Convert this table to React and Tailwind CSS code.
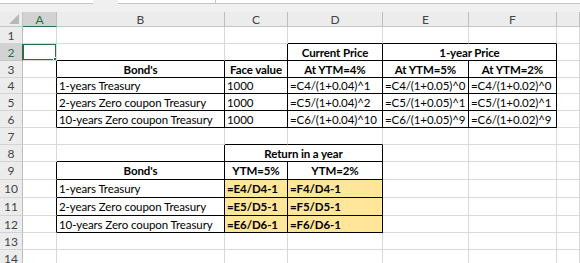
import React from "react";

const COLS = ["A", "B", "C", "D", "E", "F", "G"];
const WIDTHS = [34, 168, 63, 95, 86, 88, 23];
const HEIGHTS = [17, 17, 17, 16, 17, 17, 17, 17, 18, 18, 18, 17, 17, 17];

const bonds = [
  "1-years Treasury",
  "2-years Zero coupon Treasury",
  "10-years Zero coupon Treasury",
];

// r / b = black right / bottom border, c = centered, bold, fill = yellow
const head = (t) => ({ t, bold: 1, c: 1, r: 1, b: 1 });
const box = (t) => ({ t, r: 1, b: 1 });
const gold = (t) => ({ t, bold: 1, fill: 1, r: 1, b: 1 });

const sheet = {
  1: { D: { b: 1 }, E: { b: 1 }, F: { b: 1 } },
  2: {
    B: { b: 1 },
    C: { b: 1, r: 1 },
    D: head("Current Price"),
    E: { ...head("1-year Price"), span: 2 },
  },
  3: {
    A: { r: 1 },
    B: head("Bond's"),
    C: head("Face value"),
    D: head("At YTM=4%"),
    E: head("At YTM=5%"),
    F: head("At YTM=2%"),
  },
  4: {
    A: { r: 1 },
    B: box(bonds[0]),
    C: box("1000"),
    D: box("=C4/(1+0.04)^1"),
    E: box("=C4/(1+0.05)^0"),
    F: box("=C4/(1+0.02)^0"),
  },
  5: {
    A: { r: 1 },
    B: box(bonds[1]),
    C: box("1000"),
    D: box("=C5/(1+0.04)^2"),
    E: box("=C5/(1+0.05)^1"),
    F: box("=C5/(1+0.02)^1"),
  },
  6: {
    A: { r: 1 },
    B: box(bonds[2]),
    C: box("1000"),
    D: box("=C6/(1+0.04)^10"),
    E: box("=C6/(1+0.05)^9"),
    F: box("=C6/(1+0.02)^9"),
  },
  7: { C: { b: 1 }, D: { b: 1 } },
  8: { B: { r: 1, b: 1 }, C: { ...head("Return in a year"), span: 2 } },
  9: { A: { r: 1 }, B: head("Bond's"), C: head("YTM=5%"), D: head("YTM=2%") },
  10: { A: { r: 1 }, B: box(bonds[0]), C: gold("=E4/D4-1"), D: gold("=F4/D4-1") },
  11: { A: { r: 1 }, B: box(bonds[1]), C: gold("=E5/D5-1"), D: gold("=F5/D5-1") },
  12: { A: { r: 1 }, B: box(bonds[2]), C: gold("=E6/D6-1"), D: gold("=F6/D6-1") },
};

const Cell = ({ spec = {}, width, selected }) => (
  <div
    className={`relative flex shrink-0 items-center overflow-hidden whitespace-nowrap border-r border-b px-[2px] pt-[1px] text-[11.5px] leading-none tracking-[-0.1px] text-black ${
      spec.r ? "border-r-black" : "border-r-[#d9d9d9]"
    } ${spec.b ? "border-b-black" : "border-b-[#d9d9d9]"} ${
      spec.c ? "justify-center" : "justify-start"
    } ${spec.bold ? "font-bold" : "font-normal"} ${
      spec.fill ? "bg-[#ffe699]" : "bg-white"
    }`}
    style={{ width }}
  >
    {spec.t}
    {selected && (
      <div className="absolute -top-[1px] -left-[1px] -right-[1px] -bottom-[1px] border-2 border-[#217346]">
        <div className="absolute -right-[4px] -bottom-[4px] h-[6px] w-[6px] border border-white bg-[#217346]" />
      </div>
    )}
  </div>
);

const Row = ({ n, height }) => {
  const specs = sheet[n] || {};
  const cells = [];
  for (let i = 0; i < COLS.length; i++) {
    const spec = specs[COLS[i]];
    let width = WIDTHS[i];
    if (spec && spec.span) {
      for (let k = 1; k < spec.span; k++) width += WIDTHS[i + k];
      cells.push(<Cell key={i} spec={spec} width={width} />);
      i += spec.span - 1;
    } else {
      cells.push(
        <Cell key={i} spec={spec} width={width} selected={n === 2 && i === 0} />
      );
    }
  }
  const active = n === 2;
  return (
    <div className="flex" style={{ height }}>
      <div
        className={`flex w-[23px] shrink-0 items-center justify-center border-b border-r pt-[1px] text-[12px] ${
          active
            ? "border-b-[#c6c6c6] border-r-[#217346] bg-[#d2d2d2] text-[#217346]"
            : "border-b-[#d4d4d4] border-r-[#bdbdbd] bg-[#ececec] text-[#444]"
        }`}
      >
        {n}
      </div>
      {cells}
    </div>
  );
};

export default function App() {
  return (
    <div className="h-[263px] w-[580px] overflow-hidden bg-white font-['Lato',sans-serif]">
      {/* formula bar edge */}
      <div className="flex h-[4px] bg-[#f0f0f0]">
        <div className="w-[93px] border-b border-[#c6c6c6] bg-white" />
        <div className="w-[25px]" />
        <div className="flex flex-1 border-b border-[#c6c6c6] bg-white">
          <div className="ml-[97px] h-[3px] w-px bg-[#c6c6c6]" />
        </div>
      </div>
      <div className="h-[8px] bg-[#f0f0f0]" />

      {/* column headers */}
      <div className="flex h-[15px] bg-[#ececec]">
        <div className="relative w-[23px] shrink-0 border-r border-b border-[#c6c6c6]">
          <svg className="absolute right-[3px] bottom-[2px]" width="10" height="10" viewBox="0 0 10 10">
            <polygon points="10,0 10,10 0,10" fill="#b7b7b7" />
          </svg>
        </div>
        {COLS.map((c, i) => (
          <div
            key={c}
            className={`flex shrink-0 items-center justify-center border-r border-b pt-[1px] text-[12px] ${
              i === 0
                ? "border-r-[#bdbdbd] border-b-[#217346] bg-[#d2d2d2] text-[#217346]"
                : "border-r-[#bdbdbd] border-b-[#c6c6c6] text-[#444]"
            }`}
            style={{ width: WIDTHS[i] }}
          >
            {c === "G" ? "" : c}
          </div>
        ))}
      </div>

      {HEIGHTS.map((h, i) => (
        <Row key={i} n={i + 1} height={h} />
      ))}
    </div>
  );
}
